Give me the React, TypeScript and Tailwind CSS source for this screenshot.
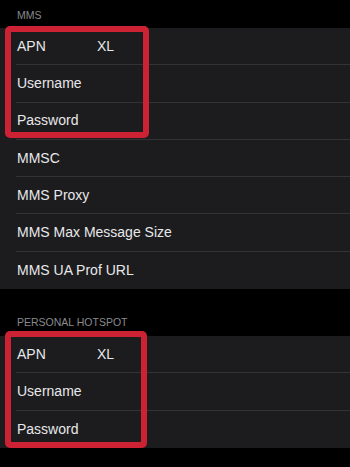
const mmsRows = [
  { label: "APN", value: "XL" },
  { label: "Username" },
  { label: "Password" },
  { label: "MMSC" },
  { label: "MMS Proxy" },
  { label: "MMS Max Message Size" },
  { label: "MMS UA Prof URL" },
];

const hotspotRows = [{ label: "APN", value: "XL" }, { label: "Username" }, { label: "Password" }];

function Row({ label, value, last }: { label: string; value?: string; last?: boolean }) {
  return (
    <div className="pl-[16px]">
      <div
        className={`flex h-[37.3px] items-center pl-[1px] text-[14px] text-[#e8e8ea] ${
          last ? "" : "border-b border-[#333336]"
        }`}
      >
        <span className="min-w-[80px] whitespace-nowrap">{label}</span>
        {value ? <span>{value}</span> : null}
      </div>
    </div>
  );
}

export default function App() {
  return (
    <div
      className="relative h-[467px] w-[350px] overflow-hidden bg-black"
      style={{ fontFamily: '"Liberation Sans", Arial, sans-serif' }}
    >
      <div className="flex h-[28px] items-center pl-[17px] pt-[4px] text-[10.5px] text-[#8a8a8e]">MMS</div>
      <div className="bg-[#1c1c1e]">
        {mmsRows.map((r, i) => (
          <Row key={r.label} label={r.label} value={r.value} last={i === mmsRows.length - 1} />
        ))}
      </div>
      <div className="flex h-[47px] items-end pb-[5px] pl-[17px] text-[10.5px] text-[#8a8a8e]">PERSONAL HOTSPOT</div>
      <div className="bg-[#1c1c1e]">
        {hotspotRows.map((r, i) => (
          <Row key={r.label} label={r.label} value={r.value} last={i === hotspotRows.length - 1} />
        ))}
      </div>

      {/* annotation boxes */}
      <div className="absolute left-[5px] top-[26px] h-[112px] w-[144px] rounded-[5px] border-[6px] border-[#cc2233]" />
      <div className="absolute left-[5px] top-[331px] h-[117px] w-[142px] rounded-[5px] border-[6px] border-[#cc2233]" />
    </div>
  );
}
